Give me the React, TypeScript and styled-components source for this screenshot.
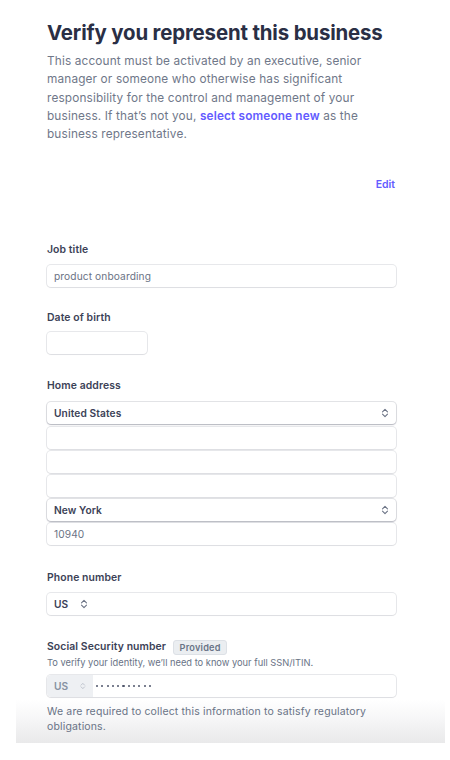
import React from "react";
import styled, { createGlobalStyle } from "styled-components";

const Global = createGlobalStyle`
  html, body { margin: 0; padding: 0; background: #fff; }
  body { font-family: Inter, "Noto Sans", "Liberation Sans", sans-serif; -webkit-font-smoothing: antialiased; }
`;

const Page = styled.div`
  width: 450px;
  padding-top: 19px;
  box-sizing: border-box;
`;

const Content = styled.div`
  margin-left: 46px;
  width: 350px;
`;

const Title = styled.h1`
  margin: 0;
  font-size: 20.4px;
  line-height: 28px;
  font-weight: 700;
  color: #2a2f45;
  letter-spacing: -0.15px;
  padding-left: 1px;
  white-space: nowrap;
`;

const Desc = styled.p`
  margin: 5px 0 0 1px;
  width: 330px;
  font-size: 11.8px;
  line-height: 18.3px;
  color: #6f7789;
  letter-spacing: 0.15px;
`;

const Link = styled.a`
  color: #635bff;
  font-weight: 600;
  text-decoration: none;
`;

const EditRow = styled.div`
  display: flex;
  justify-content: flex-end;
  margin-top: 34px;
  padding-right: 1px;
`;

const EditLink = styled.a`
  font-size: 10.5px;
  line-height: 16px;
  font-weight: 600;
  color: #635bff;
  text-decoration: none;
`;

const Section = styled.div<{ $gap: number }>`
  margin-top: ${(p) => p.$gap}px;
  display: flex;
  flex-direction: column;
`;

const LabelRow = styled.div`
  display: flex;
  align-items: center;
  gap: 7px;
  padding-left: 1px;
`;

const Label = styled.div`
  font-size: 10.4px;
  line-height: 16px;
  font-weight: 600;
  color: #3c4257;
  letter-spacing: 0.1px;
`;

const Badge = styled.span`
  font-size: 9.2px;
  line-height: 13px;
  font-weight: 600;
  color: #697386;
  background: #ebeef1;
  border: 1px solid #dde1e6;
  border-radius: 3px;
  padding: 0 5.5px;
  letter-spacing: 0.2px;
`;

const Helper = styled.div`
  font-size: 9.3px;
  line-height: 12px;
  color: #697386;
  padding-left: 1px;
  margin-top: 2px;
`;

const Stack = styled.div<{ $top: number }>`
  display: flex;
  flex-direction: column;
  gap: 2.2px;
  margin-top: ${(p) => p.$top}px;
`;

const Field = styled.div<{ $width?: number; $select?: boolean }>`
  box-sizing: border-box;
  height: 22px;
  width: ${(p) => (p.$width ? `${p.$width}px` : "349px")};
  border-radius: 4px;
  background: #fff;
  display: flex;
  align-items: center;
  padding: 0 7px;
  font-size: 10.2px;
  color: #6b7385;
  letter-spacing: 0.1px;
  box-shadow: ${(p) =>
    p.$select
      ? "0 0 0 1px rgba(60,66,87,0.14), 0 1px 1.5px rgba(60,66,87,0.28)"
      : "0 0 0 1px rgba(60,66,87,0.12), 0 1px 1px rgba(60,66,87,0.06)"};
  margin: 0 0 0 1px;
  overflow: hidden;
`;

const SelectText = styled.span`
  flex: 1;
  font-weight: 600;
  color: #3c4257;
  font-size: 10.2px;
`;

const Chevron = ({ color = "#6b7385" }: { color?: string }) => (
  <svg width="8" height="10" viewBox="0 0 8 10" fill="none">
    <path d="M1.5 3.8 L4 1.3 L6.5 3.8" stroke={color} strokeWidth="1.1" strokeLinecap="round" strokeLinejoin="round" />
    <path d="M1.5 6.2 L4 8.7 L6.5 6.2" stroke={color} strokeWidth="1.1" strokeLinecap="round" strokeLinejoin="round" />
  </svg>
);

const Country = styled.div<{ $muted?: boolean }>`
  display: flex;
  align-items: center;
  gap: 12px;
  height: 100%;
  font-weight: 600;
  font-size: 10.2px;
  color: ${(p) => (p.$muted ? "#8792a2" : "#3c4257")};
  background: ${(p) => (p.$muted ? "#eef0f3" : "transparent")};
  padding: 0 7px 0 ${(p) => (p.$muted ? 7 : 0)}px;
  margin-left: ${(p) => (p.$muted ? -7 : 0)}px;
  width: ${(p) => (p.$muted ? "32px" : "auto")};
  border-radius: 4px 0 0 4px;
`;

const Dots = styled.span`
  margin-left: 3px;
  display: flex;
  align-items: center;
  gap: 3.2px;
`;

const Dot = styled.span`
  width: 2.1px;
  height: 2.1px;
  border-radius: 50%;
  background: #4f566b;
`;

const Footer = styled.div`
  margin-top: 3px;
  margin-left: 16px;
  width: 429px;
  height: 43px;
  box-sizing: border-box;
  padding: 5px 0 0 31px;
  background: linear-gradient(#ffffff 0%, #f7f7f8 40%, #e9e9ea 100%);
  font-size: 10.5px;
  line-height: 14.5px;
  color: #697386;
  letter-spacing: 0.15px;
`;

const FooterText = styled.div`
  width: 335px;
`;

export default function App() {
  return (
    <Page>
      <Global />
      <Content>
        <Title>Verify you represent this business</Title>
        <Desc>
          This account must be activated by an executive, senior manager or someone who otherwise has significant
          responsibility for the control and management of your business. If that’s not you,{" "}
          <Link href="#">select someone new</Link> as the business representative.
        </Desc>
        <EditRow>
          <EditLink href="#">Edit</EditLink>
        </EditRow>

        <Section $gap={49}>
          <LabelRow>
            <Label>Job title</Label>
          </LabelRow>
          <Stack $top={7}>
            <Field>product onboarding</Field>
          </Stack>
        </Section>

        <Section $gap={23}>
          <LabelRow>
            <Label>Date of birth</Label>
          </LabelRow>
          <Stack $top={6}>
            <Field $width={100} />
          </Stack>
        </Section>

        <Section $gap={24}>
          <LabelRow>
            <Label>Home address</Label>
          </LabelRow>
          <Stack $top={8}>
            <Field $select>
              <SelectText>United States</SelectText>
              <Chevron />
            </Field>
            <Field />
            <Field />
            <Field />
            <Field $select>
              <SelectText>New York</SelectText>
              <Chevron />
            </Field>
            <Field>10940</Field>
          </Stack>
        </Section>

        <Section $gap={25}>
          <LabelRow>
            <Label>Phone number</Label>
          </LabelRow>
          <Stack $top={7}>
            <Field>
              <Country>
                US <Chevron />
              </Country>
            </Field>
          </Stack>
        </Section>

        <Section $gap={24}>
          <LabelRow>
            <Label>Social Security number</Label>
            <Badge>Provided</Badge>
          </LabelRow>
          <Helper>To verify your identity, we’ll need to know your full SSN/ITIN.</Helper>
          <Stack $top={6}>
            <Field>
              <Country $muted>
                US <Chevron color="#b0b7c3" />
              </Country>
              <Dots aria-label="masked SSN">
                {Array.from({ length: 11 }).map((_, i) => (
                  <Dot key={i} />
                ))}
              </Dots>
            </Field>
          </Stack>
        </Section>
      </Content>
      <Footer>
        <FooterText>We are required to collect this information to satisfy regulatory obligations.</FooterText>
      </Footer>
    </Page>
  );
}
